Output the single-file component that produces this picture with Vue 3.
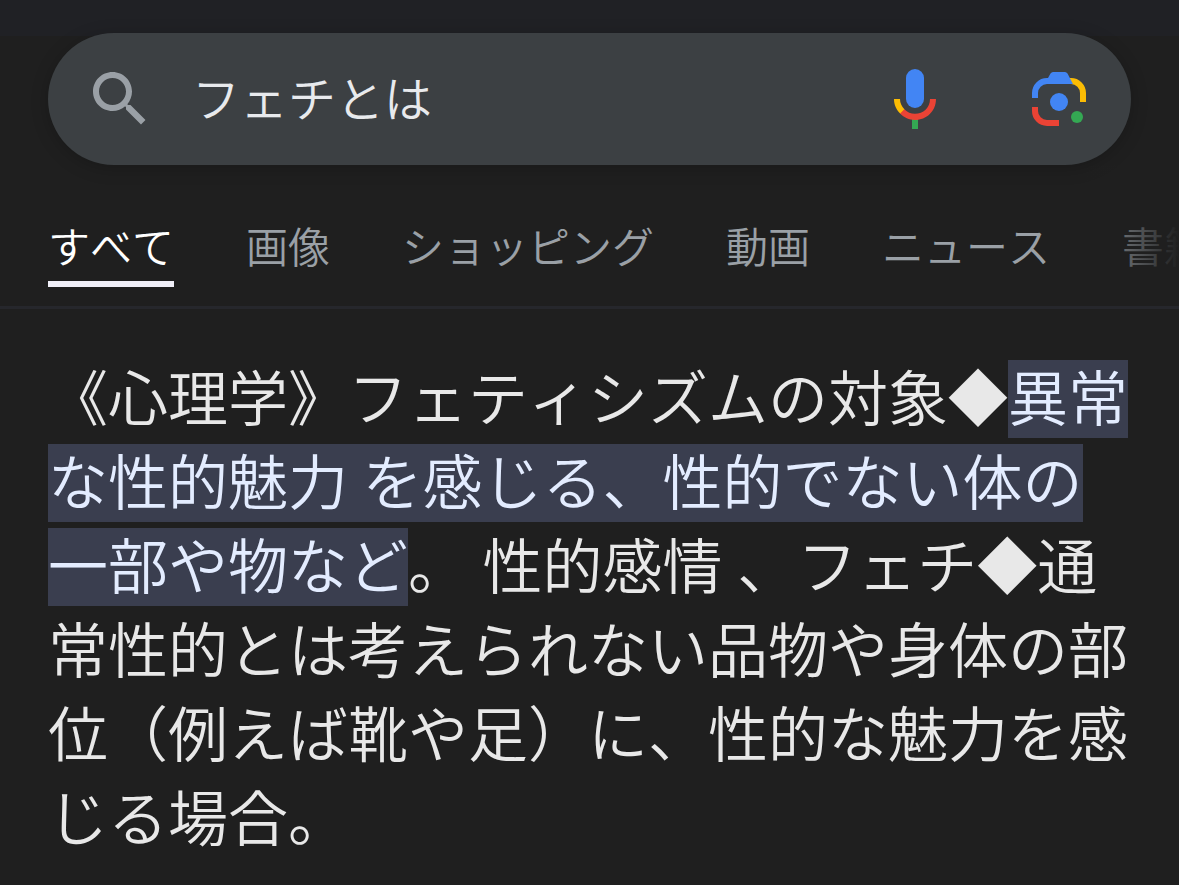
<template>
  <div class="page">
    <header class="header">
      <form class="search" role="search" @submit.prevent>
        <button class="icon-btn" type="submit" aria-label="検索">
          <svg class="icon" viewBox="0 0 24 24">
            <path
              fill="#9aa0a6"
              d="M15.5 14h-.79l-.28-.27C15.41 12.59 16 11.11 16 9.5 16 5.91 13.09 3 9.5 3S3 5.91 3 9.5 5.91 16 9.5 16c1.61 0 3.09-.59 4.23-1.57l.27.28v.79l5 4.99L20.49 19l-4.99-5zm-6 0C7.01 14 5 11.99 5 9.5S7.01 5 9.5 5 14 7.01 14 9.5 11.99 14 9.5 14z"
            />
          </svg>
        </button>
        <input v-model="query" class="query" type="text" aria-label="検索キーワード" />
        <button class="icon-btn" type="button" aria-label="音声検索">
          <svg class="icon" viewBox="0 0 24 24">
            <rect fill="#4285f4" x="9" y="2" width="6" height="13" rx="3" />
            <path fill="#34a853" d="M11 18.08h2V22h-2z" />
            <path fill="#fbbc04" d="M7.05 16.87C5.78 15.54 5 14.04 5 12h2c0 1.45.56 2.42 1.47 3.38v.32l-1.15 1.18z" />
            <path
              fill="#ea4335"
              d="M12 16.93a4.97 5.25 0 0 1-3.54-1.55l-1.41 1.49C8.31 18.21 10.07 19 12 19c3.87 0 6.99-2.92 6.99-7H17c0 2.92-2.24 4.93-5 4.93z"
            />
          </svg>
        </button>
        <button class="icon-btn" type="button" aria-label="画像で検索">
          <svg class="icon" viewBox="-9 -9 72 72">
            <path fill="#fbbc04" d="M37 6h2a15 15 0 0 1 15 15v9h-6v-9a9 9 0 0 0-9-9h-2z" />
            <path fill="#4285f4" d="M0 26v-5A15 15 0 0 1 15 6h1l2.500-4.500Q19.500 0 21 0h12q1.500 0 2.500 1.500L41 12H15a9 9 0 0 0-9 9v5z" />
            <path fill="#ea4335" d="M0 35h6v4a9 9 0 0 0 9 9h12v6H15A15 15 0 0 1 0 39z" />
            <circle fill="#4285f4" cx="27" cy="30" r="9" />
            <circle fill="#34a853" cx="45" cy="45" r="6" />
          </svg>
        </button>
      </form>
    </header>

    <nav class="tabs">
      <a
        v-for="tab in tabs"
        :key="tab"
        href="#"
        class="tab"
        :class="{ active: tab === activeTab }"
        @click.prevent="activeTab = tab"
      >{{ tab }}</a>
    </nav>

    <main class="content">
      <p class="snippet">《心理学》フェティシズムの対象◆<mark>異常な性的魅力 を感じる、性的でない体の一部や物など</mark>。 性的感情 、フェチ◆通常性的とは考えられない品物や身体の部位（例えば靴や足）に、性的な魅力を感じる場合。</p>
    </main>
  </div>
</template>

<script setup>
import { ref } from 'vue'

const query = ref('フェチとは')
const tabs = ['すべて', '画像', 'ショッピング', '動画', 'ニュース', '書籍']
const activeTab = ref('すべて')
</script>

<style>
body {
  margin: 0;
  background: #1f1f1f;
}
</style>

<style scoped>
.page {
  min-height: 100vh;
  overflow: hidden;
  background: linear-gradient(#202125 36px, #1f1f1f 36px);
  font-family: Roboto, "Noto Sans CJK JP", sans-serif;
  font-weight: 350;
  font-kerning: none;
  color: #e8e8e8;
  text-spacing-trim: space-all;
}

.header {
  padding: 33px 48px 0;
}

.search {
  display: flex;
  align-items: center;
  height: 132px;
  padding: 0 36px;
  border-radius: 66px;
  background: #3c4043;
  box-shadow: 0 3px 18px rgba(0, 0, 0, 0.2);
}

.icon-btn {
  flex: none;
  padding: 0;
  border: 0;
  background: none;
  cursor: pointer;
}

.icon-btn + .icon-btn {
  margin-left: 72px;
}

.icon {
  display: block;
  width: 72px;
  height: 72px;
}

.query {
  flex: 1;
  box-sizing: border-box;
  min-width: 0;
  height: 84px;
  margin-left: 36px;
  padding: 0 0 6px;
  border: 0;
  outline: 0;
  background: none;
  color: #e8eaed;
  font: inherit;
  font-kerning: none;
  font-size: 48px;
}

.tabs {
  position: relative;
  display: flex;
  gap: 72px;
  padding: 58px 48px 19px;
  border-bottom: 3px solid #26272c;
  overflow: hidden;
}

/* fades out the tabs that run past the right edge */
.tabs::after {
  content: "";
  position: absolute;
  top: 0;
  right: 0;
  bottom: -3px;
  width: 96px;
  background: linear-gradient(to right, rgba(31, 31, 31, 0), #1f1f1f);
  pointer-events: none;
}

.tab {
  flex: none;
  padding-bottom: 6px;
  border-bottom: 6px solid transparent;
  color: #9aa0a6;
  font-size: 42px;
  line-height: 52px;
  white-space: nowrap;
  text-decoration: none;
}

.tab.active {
  color: #fff;
  border-bottom-color: #f0eff8;
}

.content {
  padding: 50px 48px 24px;
}

.snippet {
  margin: 0;
  font-size: 60px;
  line-height: 84px;
}

.snippet mark {
  padding: 5px 0 2px;
  background: #3a3e4f;
  color: #e3ecff;
}
</style>
